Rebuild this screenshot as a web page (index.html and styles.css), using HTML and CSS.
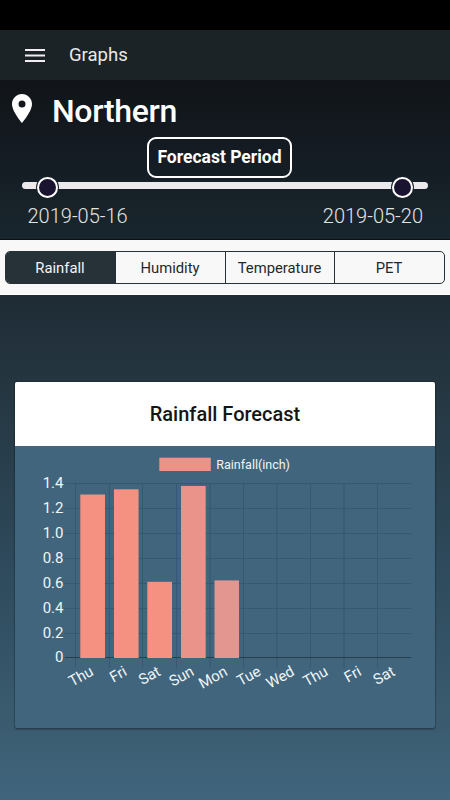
FILE: index.html
```html
<!DOCTYPE html>
<html lang="en">
<head>
<meta charset="utf-8">
<title>Graphs</title>
<link rel="stylesheet" href="styles.css">
</head>
<body>
<div class="status"></div>
<header class="toolbar">
  <svg class="menu" width="20" height="13" viewBox="0 0 20 13"><path d="M0 1h20M0 6.5h20M0 12h20" stroke="#f3ecf2" stroke-width="1.8"/></svg>
  <span>Graphs</span>
</header>
<section class="period">
  <div class="place">
    <svg class="pin" width="20" height="29" viewBox="0 0 20 29"><path fill="#fff" fill-rule="evenodd" d="M10 0C4.500 0 0 4.500 0 10c0 7.500 10 19 10 19s10-11.500 10-19C20 4.500 15.500 0 10 0Zm0 6.500a3.500 3.500 0 1 1 0 7 3.500 3.500 0 0 1 0-7Z"/></svg>
    <h1>Northern</h1>
  </div>
  <div class="badge">Forecast Period</div>
  <div class="slider"><i class="knob start"></i><i class="knob end"></i></div>
  <div class="dates"><span>2019-05-16</span><span>2019-05-20</span></div>
</section>
<nav class="tabbar">
  <div class="segments">
    <span class="active">Rainfall</span><span>Humidity</span><span>Temperature</span><span>PET</span>
  </div>
</nav>
<main class="card">
  <h2>Rainfall Forecast</h2>
  <svg class="chart" width="420" height="282" viewBox="15 446 420 282">
    <rect x="159.300" y="457.700" width="51.500" height="13.300" fill="#ee9288"/>
    <text class="legend" x="216.300" y="468.500">Rainfall(inch)</text>
    <path class="grid" d="M65 483.500H411M65 508.500H411M65 533.500H411M65 558.500H411M65 583.500H411M65 608.500H411M65 633.500H411"/>
    <path class="grid" d="M75.500 483V668M109.500 483V668M142.500 483V668M176.500 483V668M210 483V668M243.500 483V668M276.800 483V668M310.500 483V668M344 483V668M377.500 483V668"/>
    <path class="axis" d="M65 657.500H411"/>
    <g fill="#f49180">
      <rect x="80.300" y="494.500" width="24.700" height="163.500"/>
      <rect x="114" y="489.300" width="24.600" height="168.700"/>
      <rect x="147.300" y="581.800" width="24.700" height="76.200"/>
      <rect x="181" y="486" width="24.700" height="172" fill="#ea938a"/>
      <rect x="214.500" y="580.400" width="24.500" height="77.600" fill="#e39590"/>
    </g>
    <g class="values">
      <text x="63.500" y="488.200">1.4</text><text x="63.500" y="513.100">1.2</text><text x="63.500" y="538">1.0</text><text x="63.500" y="562.900">0.8</text><text x="63.500" y="587.800">0.6</text><text x="63.500" y="612.700">0.4</text><text x="63.500" y="637.600">0.2</text><text x="63.500" y="662.300">0</text>
    </g>
    <g class="days">
      <text transform="translate(94.500 674.500) rotate(-29)">Thu</text>
      <text transform="translate(128 674.500) rotate(-29)">Fri</text>
      <text transform="translate(161.500 674.500) rotate(-29)">Sat</text>
      <text transform="translate(195 674.500) rotate(-29)">Sun</text>
      <text transform="translate(228.500 674.500) rotate(-29)">Mon</text>
      <text transform="translate(262 674.500) rotate(-29)">Tue</text>
      <text transform="translate(295.500 674.500) rotate(-29)">Wed</text>
      <text transform="translate(329 674.500) rotate(-29)">Thu</text>
      <text transform="translate(362.500 674.500) rotate(-29)">Fri</text>
      <text transform="translate(396 674.500) rotate(-29)">Sat</text>
    </g>
  </svg>
</main>
</body>
</html>
```
FILE: styles.css
```css
* { box-sizing: border-box; }
body {
  margin: 0;
  height: 800px;
  overflow: hidden;
  font-family: Roboto, "Liberation Sans", sans-serif;
  color: #fff;
  background: linear-gradient(#1f2c36 295px, #253641 385px, #2e4a5c 565px, #3b5c70 728px, #40657d 800px);
}
.status { height: 30px; background: #000; }
.toolbar {
  height: 50px;
  display: flex;
  align-items: center;
  gap: 24px;
  padding-left: 25px;
  background: #1c2326;
  color: #e8e9e9;
  font-size: 18.500px;
}
.period {
  height: 160px;
  display: flex;
  flex-direction: column;
  background: linear-gradient(#111519, #141a21 40%, #19262d);
  border-bottom: 1px solid #0a1014;
}
.place { display: flex; height: 57px; padding-left: 12px; gap: 20px; }
.pin { margin-top: 14px; }
h1 { margin: 12px 0 0; font-size: 32px; line-height: 38px; font-weight: 500; letter-spacing: -.35px; }
.badge {
  align-self: center;
  width: 145px;
  height: 41px;
  margin-left: -11px;
  border: 2px solid #fff;
  border-radius: 9px;
  font-size: 17.500px;
  line-height: 37px;
  font-weight: 700;
  text-align: center;
  white-space: nowrap;
}
.slider { position: relative; height: 7px; margin: 4px 22px 0; border-radius: 4px; background: #ece9ed; }
.knob {
  position: absolute;
  top: -5px;
  width: 21px;
  height: 21px;
  border: 2.500px solid #fff;
  border-radius: 50%;
  background: #1b1430;
  box-shadow: 0 0 0 1px #19222a;
}
.start { left: 15px; }
.end { right: 15px; }
.dates {
  display: flex;
  justify-content: space-between;
  padding: 15px 27px 0 27.500px;
  font-size: 20px;
  line-height: 24px;
  font-weight: 300;
  color: #e2e5e6;
}
.tabbar { height: 55px; padding: 11px 5px; background: #f8f8f8; border-bottom: 1px solid #fff; }
.segments {
  display: grid;
  grid-template-columns: 109px 110px 109px 1fr;
  height: 33px;
  border: 1px solid #263238;
  border-radius: 5px;
  overflow: hidden;
  color: #1f282d;
  font-size: 14.800px;
  line-height: 32px;
  text-align: center;
}
.segments span { padding-right: 1px; }
.segments span + span { border-left: 1px solid #263238; }
.segments .active { background: #263238; color: #f4f5f5; }
.card {
  width: 420px;
  height: 346px;
  margin: 87px 15px 0;
  border-radius: 2px;
  overflow: hidden;
  background: #40657c;
  box-shadow: 0 0 1px 1px rgba(0, 0, 0, .18), 0 2px 2px rgba(0, 0, 0, .2);
}
h2 {
  height: 64px;
  margin: 0;
  background: #fff;
  color: #151515;
  font-size: 20px;
  line-height: 64px;
  font-weight: 500;
  text-align: center;
}
.chart { display: block; fill: #f0f5f7; }
.grid { fill: none; stroke: #355970; stroke-width: 1; }
.axis { stroke: #273f4e; stroke-width: 1; }
.legend { font-size: 12.500px; }
.values { font-size: 15px; text-anchor: end; }
.days { font-size: 15px; text-anchor: end; }
```
